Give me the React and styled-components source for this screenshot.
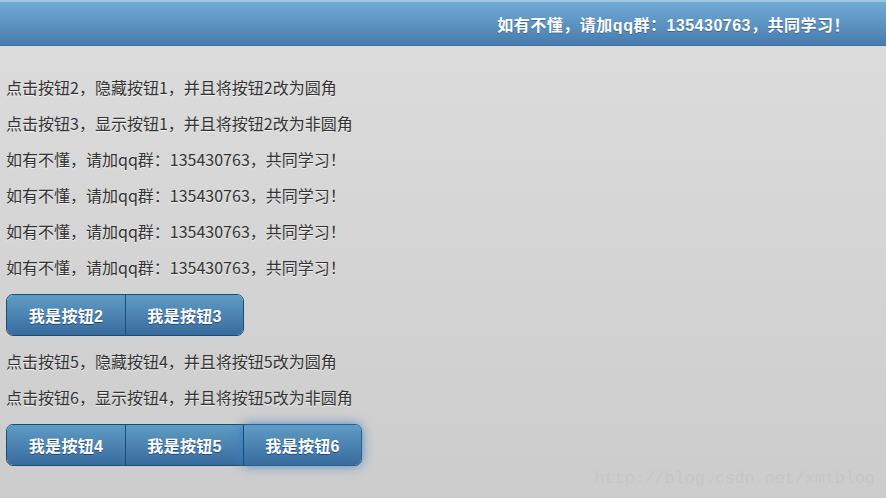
import React from "react";
import styled, { createGlobalStyle } from "styled-components";

const GlobalStyle = createGlobalStyle`
  html, body {
    margin: 0;
    padding: 0;
  }
  body {
    background: linear-gradient(#dddddd, #cccccc);
    min-height: 498px;
    font-family: "Noto Sans CJK SC", "Liberation Sans", sans-serif;
  }
`;

const Page = styled.div`
  position: relative;
  height: 498px;
  overflow: hidden;
`;

const Header = styled.header`
  height: 43px;
  border-top: 2px solid #a3c6e0;
  border-bottom: 1px solid #456f9a;
  background: linear-gradient(#6facd5, #497bae);
  display: flex;
  align-items: center;
  justify-content: flex-end;
  padding-right: 36px;
`;

const Title = styled.h1`
  margin: 0;
  font-family: "Liberation Sans", "Noto Sans CJK SC", sans-serif;
  font-size: 16px;
  font-weight: bold;
  letter-spacing: 0.5px;
  color: #fff;
  text-shadow: 0 1px 0 #3e6790;
`;

const Content = styled.main`
  padding: 23px 6px 0;
`;

const Line = styled.p`
  margin: 0;
  height: 36px;
  line-height: 36px;
  font-size: 16px;
  color: #333;
  text-shadow: 0 1px 0 #eee;
`;

const Group = styled.div`
  display: inline-flex;
  margin: 9px 0 7px;
  border: 1px solid #145072;
  border-radius: 7px;
`;

const Button = styled.button`
  height: 40px;
  width: 118px;
  padding: 0;
  border: none;
  border-left: ${(p) => (p.$first ? "none" : "1px solid #145072")};
  border-radius: ${(p) =>
    p.$first ? "6px 0 0 6px" : p.$last ? "0 6px 6px 0" : "0"};
  background: linear-gradient(#5f9cc5, #396b9e);
  color: #fff;
  font-family: "Liberation Sans", "Noto Sans CJK SC", sans-serif;
  font-size: 16px;
  font-weight: bold;
  letter-spacing: 0.3px;
  text-shadow: 0 1px 0 #194b7e;
  box-shadow: ${(p) => (p.$focus ? "0 0 12px #387bbe" : "none")};
  position: relative;
  white-space: nowrap;
  cursor: pointer;
`;

const Watermark = styled.div`
  position: absolute;
  right: 11px;
  bottom: 10px;
  font-family: "Liberation Mono", "DejaVu Sans Mono", monospace;
  font-size: 16.7px;
  color: #c6c6c6;
`;

const info = "如有不懂，请加qq群：135430763，共同学习！";

export default function App() {
  return (
    <Page>
      <GlobalStyle />
      <Header>
        <Title>{info}</Title>
      </Header>
      <Content>
        <Line>点击按钮2，隐藏按钮1，并且将按钮2改为圆角</Line>
        <Line>点击按钮3，显示按钮1，并且将按钮2改为非圆角</Line>
        <Line>{info}</Line>
        <Line>{info}</Line>
        <Line>{info}</Line>
        <Line>{info}</Line>
        <div>
          <Group>
            <Button $first>我是按钮2</Button>
            <Button $last>我是按钮3</Button>
          </Group>
        </div>
        <Line>点击按钮5，隐藏按钮4，并且将按钮5改为圆角</Line>
        <Line>点击按钮6，显示按钮4，并且将按钮5改为非圆角</Line>
        <div>
          <Group>
            <Button $first>我是按钮4</Button>
            <Button>我是按钮5</Button>
            <Button $last $focus>我是按钮6</Button>
          </Group>
        </div>
      </Content>
      <Watermark>http://blog.csdn.net/xmtblog</Watermark>
    </Page>
  );
}
